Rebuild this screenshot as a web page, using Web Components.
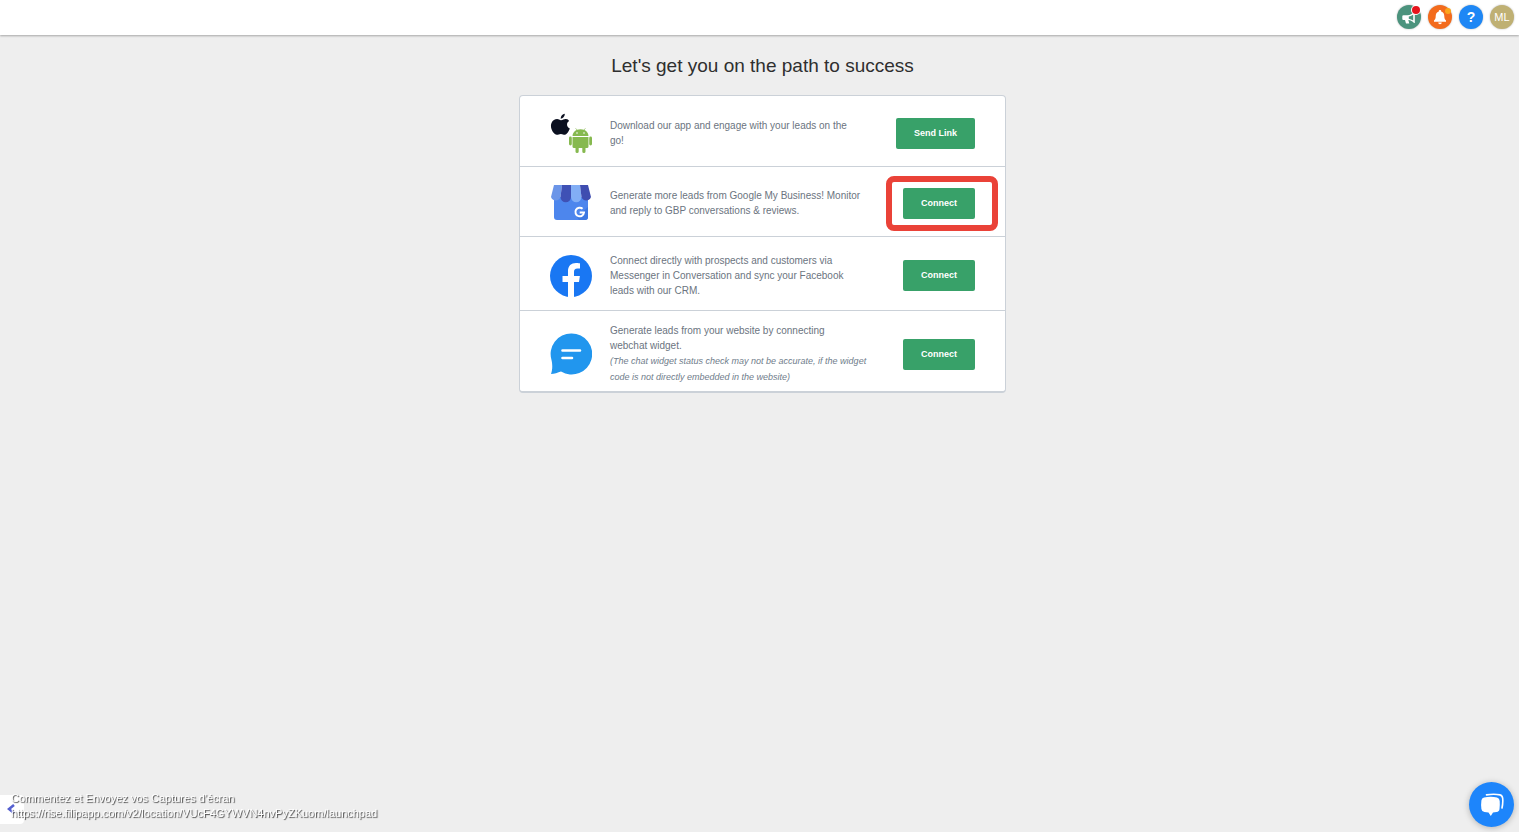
<!DOCTYPE html>
<html lang="en">
<head>
<meta charset="utf-8">
<meta name="viewport" content="width=device-width, initial-scale=1">
<title>Launchpad</title>
<style>
  :root {
    --green: #38a169;
    --line: #cbd1d8;
    --blue: #1e87f5;
  }
  body {
    margin: 0;
    background: #eee;
    color: #2f2f2f;
    font-family: "Liberation Sans", Arial, sans-serif;
  }
</style>
</head>
<body>
<launch-page>
  <top-bar slot="header"></top-bar>
  <launch-card>
    <launch-row action="Send Link">
      <svg slot="icon" viewBox="0 0 42 42" aria-hidden="true">
        <path fill="#0b1020" d="M11 8.200C13 8 14 6.800 16 7C17.500 7.100 18.500 7.900 19.100 8.900C16.200 10.700 16.300 14.900 19.800 16.600C18.900 19.400 17 22.500 14.900 22.700C13.300 22.700 12.700 21.900 10.900 21.900C9 21.900 8.300 22.700 6.900 22.800C3.800 22.900-.8 15.700 1.600 10.700C2.700 8.300 4.900 7 7.100 7C8.600 7 9.700 8.200 11 8.200ZM10.700 6.800C10.500 4 12.400 2.100 14.800 1.700C15 4.200 12.900 6.500 10.700 6.800Z"/>
        <g fill="#86b94f">
          <path d="M22.500 24C22.600 21.300 24.200 19.200 26.500 18L25.300 16.100L25.700 15.900L27 17.800C29.200 16.900 32 16.900 34 17.800L35.300 15.900L35.700 16.100L34.500 18C36.900 19.200 38.400 21.300 38.500 24Z"/>
          <path d="M22.500 25H38.500V34.500Q38.500 36 37 36H35.500V39.400A1.500 1.500 0 0 1 32.300 39.400V36H28.700V39.400A1.500 1.500 0 0 1 25.500 39.400V36H24Q22.500 36 22.500 34.500Z"/>
          <rect x="19" y="24.500" width="2.800" height="9" rx="1.400"/>
          <rect x="39.200" y="24.500" width="2.800" height="9" rx="1.400"/>
        </g>
        <circle cx="27" cy="21" r=".8" fill="#fff"/><circle cx="34" cy="21" r=".8" fill="#fff"/>
      </svg>
      Download our app and engage with your leads on the go!
    </launch-row>
    <launch-row action="Connect" highlight>
      <svg slot="icon" viewBox="0 0 42 42" aria-hidden="true">
        <path fill="#4d86ed" d="M4 15H38V35Q38 38 35 38H7Q4 38 4 35Z"/>
        <path fill="#3c78e2" d="M27 35L38 25V35Q38 38 35 38H29Z"/>
        <path fill="#6b95e8" d="M4 3H12L10.500 15A5 5 0 0 1 1 15Z"/>
        <path fill="#3f51b5" d="M12 3H21V15A5 5 0 0 1 10.500 15Z"/>
        <path fill="#82aef5" d="M21 3H30L31.500 15A5 5 0 0 1 21 15Z"/>
        <path fill="#3f4db0" d="M30 3H38L41 15A5 5 0 0 1 31.500 15Z"/>
        <path fill="none" stroke="#fff" stroke-width="2" d="M32.600 26.800A4.300 4.300 0 1 0 34 30.500H29.700"/>
      </svg>
      Generate more leads from Google My Business! Monitor and reply to GBP conversations &amp; reviews.
    </launch-row>
    <launch-row action="Connect">
      <svg slot="icon" viewBox="0 0 42 42" aria-hidden="true">
        <circle cx="21" cy="21" r="21" fill="#1977f3"/>
        <path fill="#fff" d="M18 42V27H12.500V21H18V16.300C18 11 21.200 8.100 26 8.100C28.200 8.100 30 8.500 30 8.500V13.600H27.500C24.900 13.600 24 15.200 24 16.900V21H29.900L29 27H24V42Z"/>
      </svg>
      Connect directly with prospects and customers via Messenger in Conversation and sync your Facebook leads with our CRM.
    </launch-row>
    <launch-row action="Connect" compact>
      <svg slot="icon" viewBox="0 0 42 42" aria-hidden="true">
        <path fill="#2196ee" d="M21.500 .5A20.500 20.500 0 1 1 11 38.500C8 39.500 4 41 1 41C2 38 3 34 1.500 27A20.500 20.500 0 0 1 21.500 .5Z"/>
        <path stroke="#fff" stroke-width="2.600" stroke-linecap="round" d="M12.500 17.500H30M12.500 25H22"/>
      </svg>
      Generate leads from your website by connecting webchat widget.
      <em slot="note">(The chat widget status check may not be accurate, if the widget code is not directly embedded in the website)</em>
    </launch-row>
  </launch-card>
</launch-page>
<side-toggle></side-toggle>
<capture-caption href="https://rise.filipapp.com/v2/location/VUcF4GYWVN4nvPyZKuom/launchpad">Commentez et Envoyez vos Captures d'écran</capture-caption>
<chat-launcher></chat-launcher>

<script>
class BaseElement extends HTMLElement {
  constructor() {
    super();
    this.attachShadow({ mode: 'open' });
  }

  connectedCallback() {
    this.shadowRoot.innerHTML = this.template();
  }
}

class LaunchPage extends BaseElement {
  template() {
    return `
      <style>
        :host { display: block; min-height: 100vh; box-sizing: border-box; }
        main {
          display: flex;
          flex-direction: column;
          align-items: center;
          gap: 17px;
          padding: 19px 0 0 6px;
        }
        h1 { margin: 0; font-size: 19px; line-height: 24px; font-weight: 400; }
      </style>
      <slot name="header"></slot>
      <main>
        <h1>Let's get you on the path to success</h1>
        <slot></slot>
      </main>
    `;
  }
}

class TopBar extends BaseElement {
  template() {
    return `
      <style>
        :host {
          display: flex;
          justify-content: flex-end;
          box-sizing: border-box;
          height: 35px;
          padding: 5px 5px 0;
          background: #fff;
          box-shadow: 0 1px 2px rgba(0, 0, 0, 0.3);
        }
        nav { display: flex; gap: 7px; }
        button {
          position: relative;
          display: grid;
          place-items: center;
          width: 24px;
          height: 24px;
          padding: 0;
          border: 0;
          border-radius: 50%;
          color: #fff;
          font: 11px/24px "Liberation Sans", Arial, sans-serif;
          box-shadow: 0 0 2px rgba(0, 0, 0, 0.3);
        }
        svg { width: 16px; height: 16px; }
        .news { background: #4b937d; }
        .alerts { background: #f36b1c; }
        .help { background: var(--blue); font-size: 14px; font-weight: 700; }
        .user { background: #bfb073; }
        .dot {
          position: absolute;
          top: 1px;
          right: 1px;
          width: 8px;
          height: 8px;
          border-radius: 50%;
          background: #e5141c;
        }
        .news .dot { box-shadow: 0 0 0 1px #fff; }
        .alerts .dot { width: 6px; height: 6px; top: 3px; background: #fba51b; }
      </style>
      <nav aria-label="Account">
        <button class="news" type="button" aria-label="News">
          <svg viewBox="0 0 16 16"><path fill="#fff" fill-rule="evenodd" d="M2.500 6.200H6.500C9 6.200 11.500 4.500 13 3H13.800V14H13C11.500 12.500 9.800 11.400 7.300 11.100L8.300 14.500H5L4 11H2.500Q1.300 11 1.300 9.900V7.300Q1.300 6.200 2.500 6.200ZM7.800 7.600V9.700C9.500 10 11 10.700 12.200 11.600V5.500C11 6.500 9.500 7.300 7.800 7.600Z"/></svg>
          <span class="dot"></span>
        </button>
        <button class="alerts" type="button" aria-label="Notifications">
          <svg viewBox="0 0 16 16"><path fill="#fff" d="M8 1A1.200 1.200 0 0 1 9.200 2.400C11.500 3 12.300 5 12.300 7.200C12.300 9.700 13 10.500 14 11.500V12.700H2V11.500C3 10.500 3.700 9.700 3.700 7.200C3.700 5 4.500 3 6.800 2.400A1.200 1.200 0 0 1 8 1ZM6.200 13.400H9.800A1.800 1.800 0 0 1 6.200 13.400Z"/></svg>
          <span class="dot"></span>
        </button>
        <button class="help" type="button" aria-label="Help">?</button>
        <button class="user" type="button">ML</button>
      </nav>
    `;
  }
}

class LaunchCard extends BaseElement {
  template() {
    return `
      <style>
        :host {
          display: block;
          box-sizing: border-box;
          width: 100%;
          max-width: 487px;
          overflow: hidden;
          background: #fff;
          border: 1px solid var(--line);
          border-bottom-width: 2px;
          border-radius: 4px;
        }
        ::slotted(:not(:last-child)) { border-bottom: 1px solid var(--line); }
      </style>
      <slot></slot>
    `;
  }
}

class LaunchRow extends BaseElement {
  template() {
    return `
      <style>
        :host {
          display: flex;
          align-items: center;
          padding: 16px 30px 12px;
        }
        :host([highlight]) { padding-top: 15px; }
        :host([compact]) { padding: 12px 30px 6px; }
        ::slotted(svg) { flex: none; width: 42px; height: 42px; margin-right: 18px; }
        .text { flex: 0 1 266px; }
        p { margin: 0; max-width: 252px; color: #6b7480; font-size: 10px; line-height: 15px; }
        ::slotted(em) { display: block; color: #6f7d8b; font-size: 9px; line-height: 16px; }
        .action { position: relative; margin-left: auto; }
        button {
          display: block;
          height: 31px;
          padding: 0 18px;
          border: 0;
          border-radius: 2px;
          background: var(--green);
          color: #fff;
          font: 700 9px/31px "Liberation Sans", Arial, sans-serif;
          white-space: nowrap;
        }
        .ring { display: none; }
        :host([highlight]) .ring {
          display: block;
          position: absolute;
          inset: -12px -23px -12px -17px;
          border: 6px solid #ea4238;
          border-radius: 8px;
          pointer-events: none;
        }
      </style>
      <slot name="icon"></slot>
      <div class="text">
        <p><slot></slot></p>
        <slot name="note"></slot>
      </div>
      <div class="action">
        <button type="button">${this.getAttribute('action')}</button>
        <span class="ring"></span>
      </div>
    `;
  }
}

class SideToggle extends BaseElement {
  template() {
    return `
      <style>
        :host { position: fixed; left: 0; bottom: 8px; }
        button {
          display: flex;
          align-items: center;
          width: 24px;
          height: 29px;
          padding: 0 0 2px 7px;
          border: 0;
          border-radius: 0 4px 4px 0;
          background: #fff;
        }
        svg { width: 8px; height: 10px; }
      </style>
      <button type="button" aria-label="Expand menu">
        <svg viewBox="0 0 8 10"><path d="M7 1L2 5L7 9" fill="none" stroke="#5560d0" stroke-width="2.600"/></svg>
      </button>
    `;
  }
}

class CaptureCaption extends BaseElement {
  template() {
    const href = this.getAttribute('href');
    return `
      <style>
        :host {
          position: fixed;
          left: 11px;
          bottom: 11px;
          color: #fff;
          font-size: 11px;
          line-height: 15px;
          text-shadow: 1px 1px 1px #444;
        }
        a { display: block; color: inherit; text-decoration: none; }
      </style>
      <slot></slot>
      <a href="${href}">${href}</a>
    `;
  }
}

class ChatLauncher extends BaseElement {
  template() {
    return `
      <style>
        :host { position: fixed; right: 5px; bottom: 5px; }
        button {
          display: grid;
          place-items: center;
          width: 45px;
          height: 45px;
          padding: 0;
          border: 0;
          border-radius: 50%;
          background: #1d85fb;
          box-shadow: 0 1px 6px rgba(0, 0, 0, 0.25);
        }
        svg { width: 24px; height: 24px; }
      </style>
      <button type="button" aria-label="Open chat">
        <svg viewBox="0 0 24 24">
          <path fill="#fff" d="M4 4.500Q11 3.200 17 4.500Q19.500 5 19.700 8Q20 12 19.500 16Q19.300 18.700 16.500 19L13 19.500L10.800 23L8.500 19.500L4.500 19Q1.700 18.700 1.400 16Q.8 12 1.400 7.500Q1.700 5 4 4.500Z"/>
          <path fill="none" stroke="#fff" stroke-width="1.600" stroke-linecap="round" d="M6.500 1.900Q14 .6 20 1.900Q22.400 2.400 22.700 5.500Q23.100 10 22 15"/>
        </svg>
      </button>
    `;
  }
}

customElements.define('launch-page', LaunchPage);
customElements.define('top-bar', TopBar);
customElements.define('launch-card', LaunchCard);
customElements.define('launch-row', LaunchRow);
customElements.define('side-toggle', SideToggle);
customElements.define('capture-caption', CaptureCaption);
customElements.define('chat-launcher', ChatLauncher);
</script>
</body>
</html>
